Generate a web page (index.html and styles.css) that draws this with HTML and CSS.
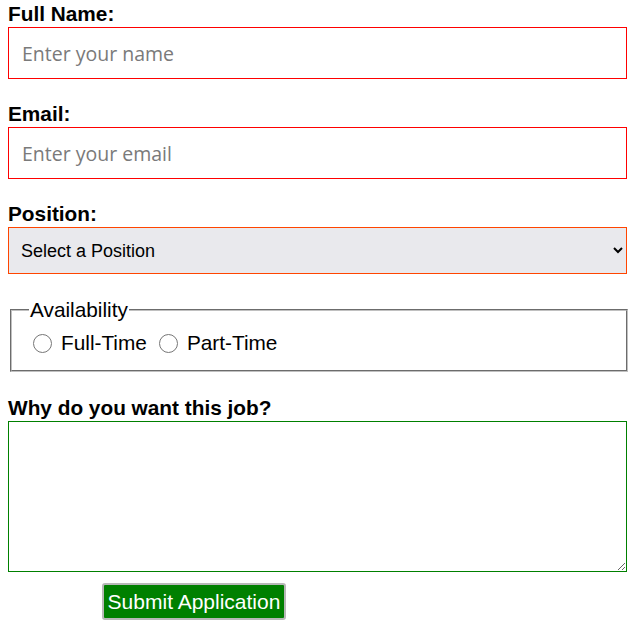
FILE: index.html
```html
<!DOCTYPE html>
<html>
<head>
<meta charset="utf-8">
<link rel="stylesheet" href="styles.css">
</head>
<body>
<form class="app-form">
  <label class="field-label" for="name">Full Name:</label>
  <input class="text-input" id="name" type="text" placeholder="Enter your name">

  <label class="field-label" for="email">Email:</label>
  <input class="text-input" id="email" type="email" placeholder="Enter your email">

  <label class="field-label" for="pos">Position:</label>
  <select class="select-input" id="pos">
    <option>Select a Position</option>
  </select>

  <fieldset class="avail">
    <legend class="avail-legend">Availability</legend>
    <label class="radio-label"><input class="radio" type="radio" name="av"> Full-Time</label>
    <label class="radio-label"><input class="radio" type="radio" name="av"> Part-Time</label>
  </fieldset>

  <label class="field-label" for="why">Why do you want this job?</label>
  <textarea class="text-area" id="why"></textarea>

  <button class="submit-btn" type="submit">Submit Application</button>
</form>
</body>
</html>
```

FILE: styles.css
```css
html, body {
  margin: 0;
  padding: 0;
  background: #fff;
}
body {
  padding: 3px 2px 0 8px;
  font-family: "Liberation Sans", Arial, sans-serif;
  color: #000;
}
.app-form {
  display: flex;
  flex-direction: column;
  align-items: stretch;
}
.field-label {
  display: block;
  font-weight: bold;
  font-size: 20.8px;
  line-height: 22px;
  margin-bottom: 2px;
}
.text-input {
  box-sizing: border-box;
  height: 52px;
  width: 100%;
  border: 1px solid #ff0000;
  padding: 0 13px;
  font-family: "Open Sans", "Noto Sans", sans-serif;
  font-size: 19.5px;
  margin: 0 0 24px 0;
  outline: none;
}
.text-input::placeholder {
  color: #7a7a7a;
}
.select-input {
  box-sizing: border-box;
  height: 47px;
  width: 100%;
  border: 1px solid #ff4500;
  background-color: #e9e9ed;
  font-family: "Liberation Sans", Arial, sans-serif;
  font-size: 18px;
  color: #000;
  padding: 0 8px;
  margin: 0 0 24px 0;
  border-radius: 0;
}
.avail {
  margin: 0 -1px 25px 2px;
  border: 2px groove #c0c0c0;
  padding: 10px 10px 15px 21px;
  display: flex;
  align-items: center;
  gap: 12px;
}
.avail-legend {
  font-size: 20.8px;
  line-height: 23px;
  padding: 0 1px;
  margin-left: -4px;
}
.radio-label {
  display: inline-flex;
  align-items: center;
  font-size: 20.8px;
  line-height: 24px;
}
.radio {
  width: 19px;
  height: 19px;
  margin: 0 9px 0 0;
}
.text-area {
  box-sizing: border-box;
  width: 100%;
  height: 151px;
  border: 1px solid #008000;
  margin: 0 0 11px 0;
  font-family: "Liberation Mono", monospace;
  outline: none;
}
.submit-btn {
  align-self: flex-start;
  margin-left: 94px;
  box-sizing: border-box;
  height: 37px;
  width: 184px;
  background: #008000;
  color: #fff;
  font-family: "Liberation Sans", Arial, sans-serif;
  font-size: 21px;
  border: 2px solid #b8b8b8;
  border-radius: 3px;
  padding: 0;
}
```
